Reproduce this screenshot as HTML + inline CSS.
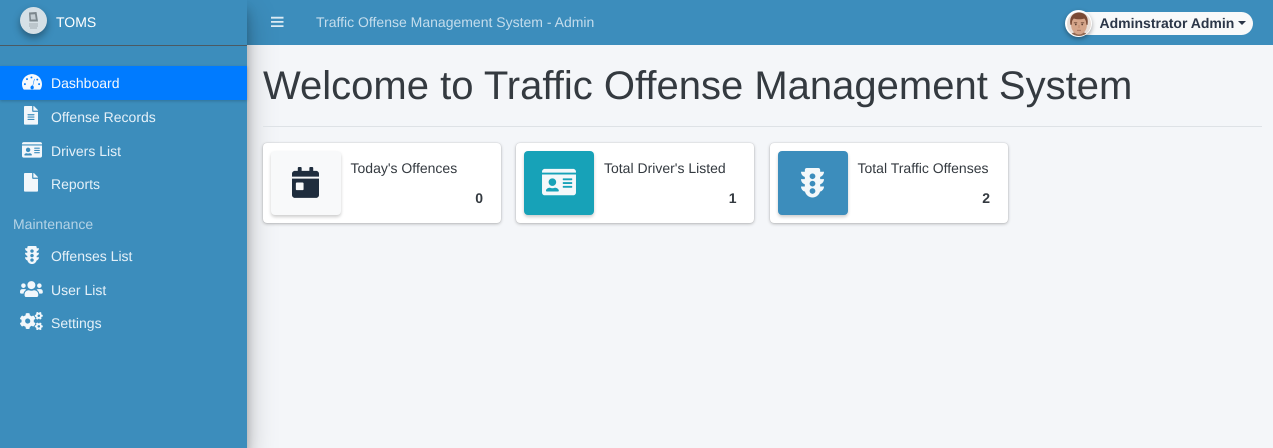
<!DOCTYPE html>
<html lang="en"><head><meta charset="utf-8"><title>TOMS</title>
<style>
*{box-sizing:border-box}
html,body{margin:0;padding:0;width:1273px;height:448px;overflow:hidden;background:#f4f6f9;font-family:"Liberation Sans",sans-serif;color:#343a40;text-rendering:geometricPrecision}
.a{position:absolute;white-space:nowrap}
#nav{left:247px;top:0;width:1026px;height:45px;background:#3c8dbc}
#side{left:0;top:0;width:247px;height:448px;background:#3c8dbc;box-shadow:0 14px 28px rgba(0,0,0,.25),0 10px 10px rgba(0,0,0,.22)}
.t{font-size:14px;line-height:20px;color:#e4f0f8}
.card{top:143px;width:238px;height:80px;background:#fff;border-radius:4px;box-shadow:0 0 1px rgba(0,0,0,.2),0 1px 3px rgba(0,0,0,.25)}
.box{left:8px;top:8px;width:70px;height:64px;border-radius:4px;box-shadow:0 2px 3px rgba(0,0,0,.2)}
.ct{left:88px;top:15px;font-size:14px;line-height:20px;color:#343a40}
.cn{right:18px;top:45px;font-size:14px;line-height:20px;font-weight:700;color:#343a40}
svg{position:absolute;display:block}
</style></head><body>
<svg width="0" height="0" style="position:absolute"><defs>
<path id="traffic" d="M384 192h-64v-37.880c37.200-13.220 64-48.380 64-90.120h-64V32c0-17.670-14.330-32-32-32H96C78.330 0 64 14.330 64 32v32H0c0 41.740 26.800 76.900 64 90.120V192H0c0 41.740 26.800 76.900 64 90.120V320H0c0 42.840 28.250 78.690 66.990 91.050C79.420 468.720 130.600 512 192 512s112.580-43.280 125.010-100.950C355.750 398.690 384 362.840 384 320h-64v-37.880c37.200-13.220 64-48.380 64-90.120zM192 448c-26.510 0-48-21.490-48-48s21.490-48 48-48 48 21.490 48 48-21.490 48-48 48zm0-128c-26.510 0-48-21.490-48-48s21.490-48 48-48 48 21.490 48 48-21.490 48-48 48zm0-128c-26.510 0-48-21.490-48-48s21.490-48 48-48 48 21.490 48 48-21.490 48-48 48z"/>
<path id="idcard" d="M528 32H48C21.500 32 0 53.500 0 80v16h576V80c0-26.500-21.500-48-48-48zM0 432c0 26.500 21.500 48 48 48h480c26.500 0 48-21.500 48-48V128H0v304zm352-232c0-4.400 3.600-8 8-8h144c4.400 0 8 3.600 8 8v16c0 4.400-3.600 8-8 8H360c-4.400 0-8-3.600-8-8v-16zm0 64c0-4.400 3.600-8 8-8h144c4.400 0 8 3.600 8 8v16c0 4.400-3.600 8-8 8H360c-4.400 0-8-3.600-8-8v-16zm0 64c0-4.400 3.600-8 8-8h144c4.400 0 8 3.600 8 8v16c0 4.400-3.600 8-8 8H360c-4.400 0-8-3.600-8-8v-16zM176 192c35.300 0 64 28.700 64 64s-28.700 64-64 64-64-28.700-64-64 28.700-64 64-64zM67.100 396.200C75.500 370.500 99.600 352 128 352h8.200c12.300 5.100 25.700 8 39.800 8s27.600-2.900 39.800-8h8.200c28.400 0 52.500 18.500 60.900 44.200 3.200 9.900-5.200 19.800-15.600 19.800H82.700c-10.400 0-18.800-10-15.600-19.800z"/>
</defs></svg>
<div class="a" id="nav"></div>
<div class="a" id="side"></div>
<div class="a" style="left:0;top:45px;width:247px;height:1px;background:#4b5a63"></div>

<div class="a" style="left:20px;top:7px;width:27px;height:27px;border-radius:50%;background:#d6e0e6;box-shadow:0 4px 8px rgba(0,0,0,.35)"></div>
<svg style="left:27px;top:11px" width="13" height="19" viewBox="0 0 13 19"><path d="M2 1.500l7.500-.5 1.500 9.500H2.500z" fill="#7c878d"/><path d="M3.500 3.500l4.500-.3.800 5.300H4z" fill="#c4ced4"/><path d="M2 13h9M2 15h9M3 17h7" stroke="#a3adb3" stroke-width="1"/></svg>
<div class="a" style="left:56px;top:12px;font-size:14px;line-height:20px;color:#fff">TOMS</div>

<div class="a" style="left:0;top:66px;width:247px;height:34px;background:#007bff;box-shadow:0 1px 3px rgba(0,0,0,.2)"></div>
<svg style="left:21.500px;top:73px" width="20" height="17.800" viewBox="0 0 576 512"><path fill="#f6f9fc" fill-rule="evenodd" d="M288 32C128.940 32 0 160.940 0 320c0 52.800 14.250 102.260 39.060 144.800 5.610 9.620 16.300 15.200 27.440 15.200h443c11.140 0 21.830-5.580 27.440-15.200C561.750 422.260 576 372.800 576 320c0-159.060-128.940-288-288-288zM272 100a28 28 0 1 0 0 56 28 28 0 0 0 0-56zM144 148a28 28 0 1 0 0 56 28 28 0 0 0 0-56zM84 292a28 28 0 1 0 0 56 28 28 0 0 0 0-56zM492 292a28 28 0 1 0 0 56 28 28 0 0 0 0-56zM440 160a28 28 0 1 0 0 56 28 28 0 0 0 0-56zM350 170l-44 190c-34-4-62 22-62 58 0 20 8 38 24 50h48c16-12 24-30 24-50 0-22-8-40-24-50l50-194z"/></svg>
<div class="a t" style="left:51px;top:73px;color:#f3f8fd">Dashboard</div>

<svg style="left:24.400px;top:106px" width="14" height="18.670" viewBox="0 0 384 512"><path fill="#f2f7fb" d="M224 136V0H24C10.700 0 0 10.700 0 24v464c0 13.300 10.700 24 24 24h336c13.300 0 24-10.700 24-24V160H248c-13.200 0-24-10.800-24-24zm64 236c0 6.600-5.400 12-12 12H108c-6.600 0-12-5.400-12-12v-8c0-6.600 5.400-12 12-12h168c6.600 0 12 5.400 12 12v8zm0-64c0 6.600-5.400 12-12 12H108c-6.600 0-12-5.400-12-12v-8c0-6.600 5.400-12 12-12h168c6.600 0 12 5.400 12 12v8zm0-72v8c0 6.600-5.400 12-12 12H108c-6.600 0-12-5.400-12-12v-8c0-6.600 5.400-12 12-12h168c6.600 0 12 5.400 12 12zm96-114.100v6.100H256V0h6.100c6.400 0 12.500 2.500 17 7l97.900 98c4.500 4.500 7 10.600 7 16.900z"/></svg>
<div class="a t" style="left:51px;top:107px">Offense Records</div>

<svg style="left:21.500px;top:140.500px" width="20" height="17.800" viewBox="0 0 576 512"><use href="#idcard" fill="#f2f7fb"/></svg>
<div class="a t" style="left:51px;top:141px">Drivers List</div>

<svg style="left:24.400px;top:173px" width="14" height="18.670" viewBox="0 0 384 512"><path fill="#f2f7fb" d="M224 136V0H24C10.700 0 0 10.700 0 24v464c0 13.300 10.700 24 24 24h336c13.300 0 24-10.700 24-24V160H248c-13.200 0-24-10.800-24-24zm160-14.100v6.100H256V0h6.100c6.400 0 12.500 2.500 17 7l97.900 98c4.500 4.500 7 10.600 7 16.900z"/></svg>
<div class="a t" style="left:51px;top:174px">Reports</div>

<div class="a" style="left:13px;top:214px;font-size:14px;line-height:20px;color:#b4d3e6">Maintenance</div>

<svg style="left:24.500px;top:245.500px" width="14" height="18" viewBox="0 0 384 512" preserveAspectRatio="none"><use href="#traffic" fill="#f2f7fb"/></svg>
<div class="a t" style="left:51px;top:246px">Offenses List</div>

<svg style="left:20px;top:280px" width="22.800" height="18.200" viewBox="0 0 640 512"><path fill="#f2f7fb" d="M96 224c35.300 0 64-28.700 64-64s-28.700-64-64-64-64 28.700-64 64 28.700 64 64 64zm448 0c35.300 0 64-28.700 64-64s-28.700-64-64-64-64 28.700-64 64 28.700 64 64 64zm32 32h-64c-17.600 0-33.500 7.100-45.100 18.600 40.300 22.100 68.900 62 75.100 109.400h66c17.700 0 32-14.300 32-32v-32c0-35.300-28.700-64-64-64zm-256 0c61.900 0 112-50.100 112-112S381.900 32 320 32 208 82.100 208 144s50.100 112 112 112zm76.800 32h-8.300c-20.800 10-43.900 16-68.500 16s-47.600-6-68.500-16h-8.300C179.600 288 128 339.600 128 403.200V432c0 26.500 21.500 48 48 48h288c26.500 0 48-21.500 48-48v-28.800c0-63.600-51.600-115.200-115.200-115.200zm-223.700-13.400C161.500 263.100 145.600 256 128 256H64c-35.300 0-64 28.700-64 64v32c0 17.700 14.300 32 32 32h65.900c6.300-47.400 34.900-87.300 75.200-109.400z"/></svg>
<div class="a t" style="left:51px;top:280px">User List</div>

<svg style="left:20px;top:312px" width="22.800" height="18.200" viewBox="0 0 640 512"><path fill="#f2f7fb" d="M512.100 191l-8.200 14.300c-3 5.300-9.400 7.500-15.100 5.400-11.800-4.400-22.600-10.700-32.100-18.600-4.600-3.800-5.800-10.500-2.800-15.700l8.200-14.300c-6.900-8-12.300-17.300-15.900-27.400h-16.500c-6 0-11.200-4.300-12.200-10.300-2-12-2.100-24.600 0-37.100 1-6 6.200-10.400 12.200-10.400h16.500c3.600-10.100 9-19.400 15.900-27.400l-8.200-14.300c-3-5.200-1.900-11.900 2.800-15.700 9.500-7.900 20.400-14.200 32.100-18.600 5.700-2.100 12.100.1 15.100 5.400l8.200 14.300c10.500-1.900 21.200-1.900 31.700 0L552 6.300c3-5.300 9.400-7.500 15.100-5.400 11.800 4.400 22.600 10.700 32.100 18.600 4.600 3.800 5.800 10.500 2.800 15.700l-8.200 14.300c6.900 8 12.300 17.300 15.900 27.400h16.500c6 0 11.200 4.300 12.200 10.300 2 12 2.100 24.600 0 37.100-1 6-6.200 10.400-12.200 10.400h-16.500c-3.600 10.100-9 19.400-15.900 27.400l8.200 14.300c3 5.200 1.900 11.900-2.800 15.700-9.500 7.900-20.400 14.200-32.100 18.600-5.700 2.100-12.100-.1-15.100-5.400l-8.200-14.300c-10.400 1.900-21.200 1.900-31.700 0zm-10.500-58.800c38.500 29.600 82.400-14.300 52.800-52.800-38.500-29.700-82.400 14.300-52.800 52.800zM386.300 286.100l33.700 16.800c10.100 5.800 14.500 18.100 10.500 29.100-8.900 24.200-26.400 46.400-42.600 65.800-7.400 8.900-20.200 11.100-30.300 5.300l-29.100-16.800c-16 13.700-34.600 24.600-54.900 31.700v33.600c0 11.600-8.300 21.600-19.700 23.600-24.600 4.200-50.400 4.400-75.900 0-11.500-2-20-11.900-20-23.600V418c-20.300-7.200-38.900-18-54.900-31.700L74 403c-10 5.800-22.900 3.600-30.300-5.300-16.200-19.400-33.300-41.600-42.200-65.700-4-10.900.4-23.200 10.500-29.100l33.300-16.800c-3.900-20.900-3.900-42.400 0-63.400L12 205.800c-10.100-5.800-14.600-18.100-10.500-29 8.900-24.200 26-46.400 42.200-65.800 7.400-8.900 20.200-11.100 30.300-5.300l29.100 16.800c16-13.700 34.600-24.600 54.900-31.700V57.100c0-11.500 8.200-21.500 19.600-23.500 24.600-4.200 50.500-4.400 76-.1 11.500 2 20 11.900 20 23.600v33.600c20.300 7.200 38.900 18 54.900 31.700l29.100-16.800c10-5.800 22.900-3.600 30.300 5.300 16.200 19.400 33.200 41.600 42.100 65.800 4 10.900.1 23.200-10 29.100l-33.700 16.800c3.900 21 3.900 42.500 0 63.500zm-117.600 21.100c59.200-77-28.700-164.900-105.700-105.700-59.200 77 28.700 164.900 105.700 105.700zm243.400 182.700l-8.200 14.300c-3 5.300-9.400 7.500-15.100 5.400-11.800-4.400-22.600-10.700-32.100-18.600-4.600-3.800-5.800-10.500-2.800-15.700l8.200-14.300c-6.900-8-12.300-17.300-15.900-27.400h-16.500c-6 0-11.200-4.300-12.200-10.300-2-12-2.100-24.600 0-37.100 1-6 6.200-10.400 12.200-10.400h16.500c3.600-10.100 9-19.400 15.900-27.400l-8.200-14.300c-3-5.200-1.900-11.900 2.800-15.700 9.500-7.900 20.400-14.200 32.100-18.600 5.700-2.100 12.100.1 15.100 5.400l8.200 14.300c10.500-1.900 21.200-1.900 31.700 0l8.200-14.300c3-5.300 9.400-7.500 15.100-5.400 11.800 4.400 22.600 10.700 32.100 18.600 4.600 3.800 5.800 10.500 2.800 15.700l-8.200 14.300c6.900 8 12.300 17.300 15.900 27.400h16.500c6 0 11.200 4.300 12.200 10.300 2 12 2.100 24.600 0 37.100-1 6-6.200 10.400-12.200 10.400h-16.500c-3.600 10.100-9 19.400-15.900 27.400l8.200 14.300c3 5.200 1.900 11.900-2.800 15.700-9.500 7.900-20.400 14.200-32.100 18.600-5.700 2.100-12.100-.1-15.100-5.400l-8.200-14.300c-10.400 1.900-21.200 1.900-31.700 0zM501.600 431c38.500 29.600 82.400-14.300 52.800-52.800-38.500-29.600-82.400 14.300-52.800 52.800z"/></svg>
<div class="a t" style="left:51px;top:313px">Settings</div>

<svg style="left:271px;top:16px" width="13" height="12" viewBox="0 0 13 12"><path fill="#dcebf4" d="M0 .8h12.500v1.800H0zM0 5h12.500v1.800H0zM0 9.200h12.500V11H0z"/></svg>
<div class="a" style="left:316px;top:12px;font-size:14px;line-height:20px;color:#c3dcec">Traffic Offense Management System - Admin</div>

<div class="a" style="left:1070px;top:12px;width:183px;height:23px;border-radius:12px;background:#f8f9fa"></div>
<div class="a" style="left:1099.500px;top:13px;font-size:14px;line-height:20px;font-weight:700;color:#2b3648">Adminstrator Admin</div>
<svg style="left:1238px;top:21px" width="8" height="4" viewBox="0 0 8 4"><path fill="#2b3648" d="M0 0h8L4 4z"/></svg>
<div class="a" style="left:1065px;top:10px;width:27px;height:27px;border-radius:50%;background:#fff;box-shadow:0 2px 5px rgba(0,0,0,.35)"></div>
<svg style="left:1066.500px;top:11.500px" width="24" height="24" viewBox="0 0 24 24"><defs><clipPath id="c"><circle cx="12" cy="12" r="12"/></clipPath></defs><g clip-path="url(#c)"><rect width="24" height="24" fill="#e8ded8"/><path d="M3 24c1-3 4-4 9-4s8 1 9 4z" fill="#8f6650"/><ellipse cx="12" cy="12.500" rx="8" ry="10" fill="#d5a58a"/><path d="M3.500 13C2 5 6 .5 12 .5S22 5 20.500 13l-1.300-.5c.2-3-.8-5-2-6-2.500 1-7.500 1-10.300 0-1.300 1-2.300 3-2 6z" fill="#7a4a35"/><path d="M6.800 10.800h3.400M13.800 10.800h3.400" stroke="#6d4635" stroke-width=".9"/><circle cx="8.800" cy="12.500" r=".9" fill="#5a3f33"/><circle cx="15.200" cy="12.500" r=".9" fill="#5a3f33"/><path d="M12 13v3" stroke="#b98468" stroke-width=".8"/><path d="M10 18.300h4" stroke="#a56c58" stroke-width=".9"/></g></svg>

<div class="a" style="left:263px;top:62px;font-size:40px;line-height:48px;color:#343a40">Welcome to Traffic Offense Management System</div>
<div class="a" style="left:263px;top:126px;width:999px;height:1px;background:#dee2e6"></div>

<div class="a card" style="left:263px">
  <div class="a box" style="background:#f8f9fa"></div>
  <svg style="left:29px;top:24.300px" width="27" height="30.900" viewBox="0 0 448 512"><path fill="#1f2d3d" d="M0 464c0 26.500 21.500 48 48 48h352c26.500 0 48-21.500 48-48V192H0v272zm64-192c0-8.800 7.200-16 16-16h96c8.800 0 16 7.200 16 16v96c0 8.800-7.200 16-16 16H80c-8.800 0-16-7.200-16-16v-96zM400 64h-48V16c0-8.800-7.200-16-16-16h-32c-8.800 0-16 7.200-16 16v48H160V16c0-8.800-7.200-16-16-16h-32c-8.800 0-16 7.200-16 16v48H48C21.500 64 0 85.500 0 112v48h448v-48c0-26.500-21.500-48-48-48z"/></svg>
  <div class="a ct" style="left:87.500px">Today's Offences</div>
  <div class="a cn">0</div>
</div>
<div class="a card" style="left:516px">
  <div class="a box" style="background:#17a2b8"></div>
  <svg style="left:26px;top:24px" width="34" height="30.200" viewBox="0 0 576 512"><use href="#idcard" fill="#f4f8fa"/></svg>
  <div class="a ct">Total Driver's Listed</div>
  <div class="a cn" style="right:17.500px">1</div>
</div>
<div class="a card" style="left:770px">
  <div class="a box" style="background:#3c8dbc"></div>
  <svg style="left:31px;top:25px" width="23" height="29.500" viewBox="0 0 384 512" preserveAspectRatio="none"><use href="#traffic" fill="#f4f8fa"/></svg>
  <div class="a ct" style="left:87.500px">Total Traffic Offenses</div>
  <div class="a cn">2</div>
</div>
</body></html>
